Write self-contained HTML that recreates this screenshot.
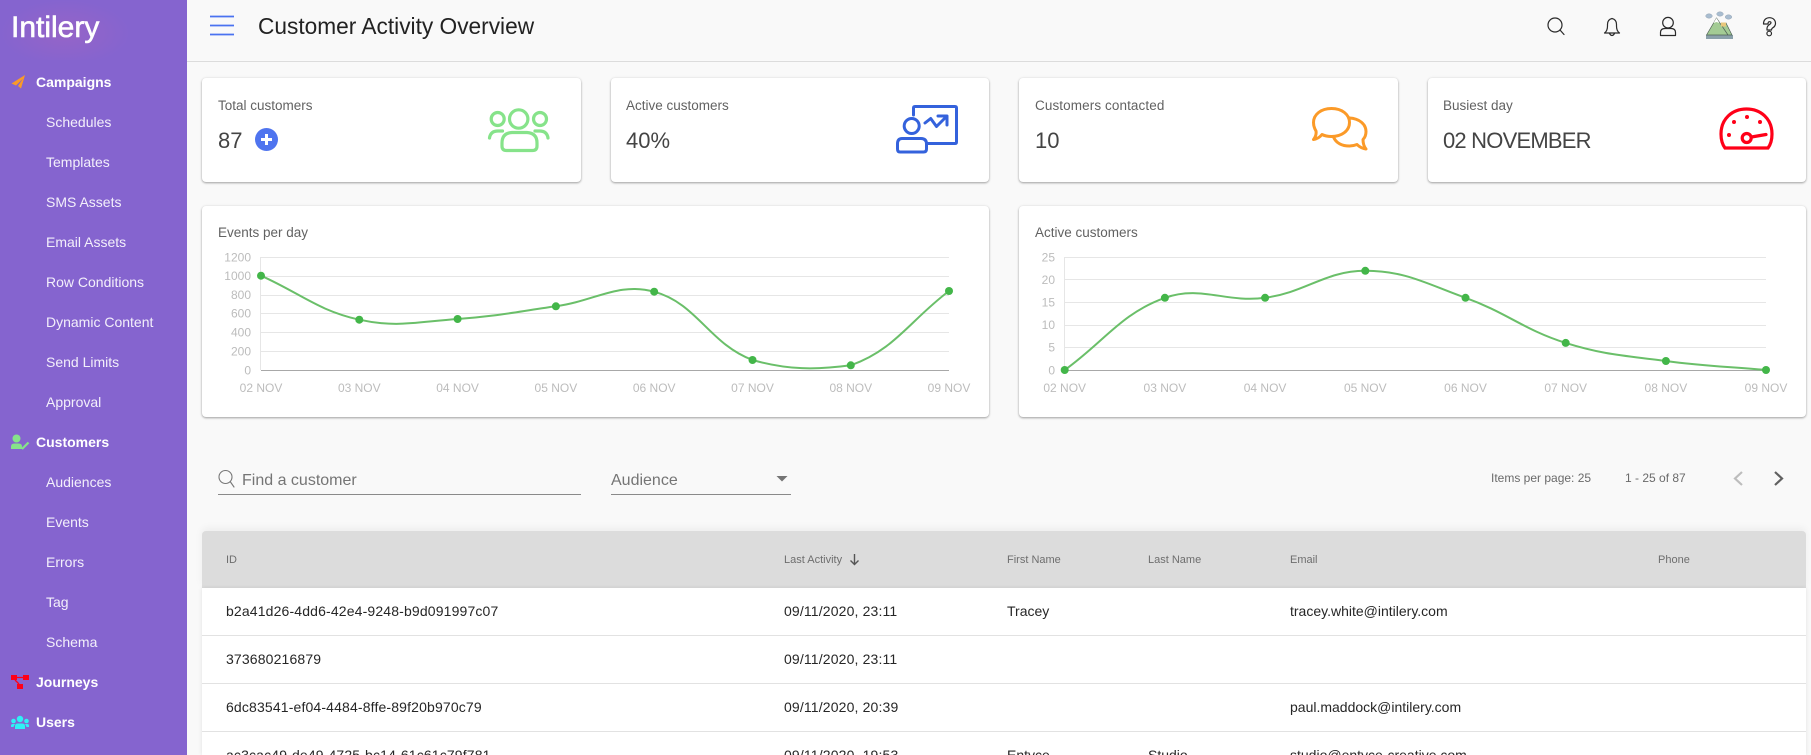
<!DOCTYPE html>
<html lang="en">
<head>
<meta charset="utf-8">
<title>Customer Activity Overview</title>
<style>
html,body{margin:0;padding:0;width:1811px;height:755px;overflow:hidden;background:#f9f9f9;font-family:"Liberation Sans",sans-serif;color:#222}
#wrap{position:relative;width:1811px;height:755px;overflow:hidden;background:#f9f9f9}
.t{position:absolute;white-space:nowrap;line-height:20px;height:20px}
#side{position:absolute;left:0;top:0;width:187px;height:755px;background:#8564cf;overflow:hidden}
#glow{position:absolute;left:0;top:0;width:130px;height:60px;background:radial-gradient(ellipse at 50% 55%,rgba(170,100,190,.45),rgba(133,100,207,0) 70%)}
.logo{left:11px;top:12px;font-size:30px;line-height:32px;height:32px;color:#fff;-webkit-text-stroke:.6px #fff}
.n{left:46px;font-size:14px;color:#f3effb}
.h{left:36px;font-size:14px;font-weight:bold;color:#fff}
#top{position:absolute;left:187px;top:0;right:0;height:61px;border-bottom:1px solid #dcdcdc}
.card{position:absolute;background:#fff;border-radius:4px;box-shadow:0 1px 2px rgba(0,0,0,.35),0 0 3px rgba(0,0,0,.06)}
.lab{font-size:13.5px;color:#626262}
.val{font-size:22px;color:#444;line-height:26px;height:26px}
#thead{position:absolute;left:202px;top:531px;width:1604px;height:57px;background:#dcdcdc;border-radius:4px 4px 0 0;box-shadow:0 -3px 8px rgba(0,0,0,.05)}
#tbody{position:absolute;left:202px;top:588px;width:1604px;height:167px;background:#fff;box-shadow:0 0 4px rgba(0,0,0,.1)}
.rl{position:absolute;left:202px;width:1604px;height:1px;background:#e2e2e2}
.th{font-size:11px;color:#6e6e6e}
.td{font-size:14px;color:#262626}
.sp{letter-spacing:.15px}
svg{position:absolute;left:0;top:0;overflow:visible}
</style>
</head>
<body>
<div id="wrap">
<div id="side">
  <div id="glow"></div>
  <div class="t logo">Intilery</div>
  <div class="t h" style="top:72px">Campaigns</div>
  <div class="t n" style="top:112px">Schedules</div>
  <div class="t n" style="top:152px">Templates</div>
  <div class="t n" style="top:192px">SMS Assets</div>
  <div class="t n" style="top:232px">Email Assets</div>
  <div class="t n" style="top:272px">Row Conditions</div>
  <div class="t n" style="top:312px">Dynamic Content</div>
  <div class="t n" style="top:352px">Send Limits</div>
  <div class="t n" style="top:392px">Approval</div>
  <div class="t h" style="top:432px">Customers</div>
  <div class="t n" style="top:472px">Audiences</div>
  <div class="t n" style="top:512px">Events</div>
  <div class="t n" style="top:552px">Errors</div>
  <div class="t n" style="top:592px">Tag</div>
  <div class="t n" style="top:632px">Schema</div>
  <div class="t h" style="top:672px">Journeys</div>
  <div class="t h" style="top:712px">Users</div>
  <svg width="187" height="755">
    <path d="M25 75 L11.5 83.5 L16 85.5 L23 78.5 L18 86 L21 88.5 Z" fill="#fb9a28"/>
    <circle cx="16.5" cy="438.5" r="4" fill="#86e38a"/><path d="M11 449 V446.5 Q11 443.5 14.5 443.5 H18.5 Q22 443.5 22 446.5 V449 Z" fill="#86e38a"/><path d="M22 449 L28.5 442.5" stroke="#86e38a" stroke-width="2.2"/>
    <rect x="11" y="675" width="6" height="5" fill="#ff0018"/><rect x="23" y="675" width="6" height="5" fill="#ff0018"/><rect x="17" y="684" width="6" height="5" fill="#ff0018"/><path d="M17 677.5 H23 M15 680 L19 684" stroke="#ff0018" stroke-width="1.3" fill="none"/>
    <g fill="#2ff0f5"><circle cx="20" cy="719" r="3.2"/><circle cx="13.5" cy="721" r="2.3"/><circle cx="26.5" cy="721" r="2.3"/><path d="M15 729 V726 Q15 723.5 18 723.5 H22 Q25 723.5 25 726 V729 Z"/><path d="M11 727 V725.5 Q11 724 13 724 H15 L13.5 727 Z"/><path d="M29 727 V725.5 Q29 724 27 724 H25 L26.5 727 Z"/></g>
  </svg>
</div>

<div id="top"></div>
<div class="t" style="left:258px;top:11px;font-size:22.7px;line-height:30px;height:30px;color:#222">Customer Activity Overview</div>

<div class="card" style="left:202px;top:78px;width:379px;height:104px"></div>
<div class="card" style="left:611px;top:78px;width:378px;height:104px"></div>
<div class="card" style="left:1019px;top:78px;width:379px;height:104px"></div>
<div class="card" style="left:1428px;top:78px;width:378px;height:104px"></div>
<div class="t lab" style="left:218px;top:96px">Total customers</div>
<div class="t lab" style="left:626px;top:96px">Active customers</div>
<div class="t lab" style="left:1035px;top:96px;letter-spacing:.1px">Customers contacted</div>
<div class="t lab" style="left:1443px;top:96px">Busiest day</div>
<div class="t val" style="left:218px;top:128px">87</div>
<div class="t val" style="left:626px;top:128px">40%</div>
<div class="t val" style="left:1035px;top:128px">10</div>
<div class="t val" style="left:1443px;top:128px;letter-spacing:-.8px">02 NOVEMBER</div>

<div class="card" style="left:202px;top:206px;width:787px;height:211px"></div>
<div class="card" style="left:1019px;top:206px;width:787px;height:211px"></div>
<div class="t lab" style="left:218px;top:223px">Events per day</div>
<div class="t lab" style="left:1035px;top:223px">Active customers</div>

<div id="thead"></div>
<div id="tbody"></div>
<div class="rl" style="top:635px"></div>
<div class="rl" style="top:683px"></div>
<div class="rl" style="top:731px"></div>

<svg width="1811" height="755">
  <!-- hamburger -->
  <path d="M210 16.5 H234 M210 25.5 H234 M210 34.5 H234" stroke="#4a72f0" stroke-width="1.7" fill="none"/>
  <!-- top icons -->
  <g fill="none" stroke="#2a2a2a" stroke-width="1.2" stroke-linecap="round" stroke-linejoin="round">
    <circle cx="1555" cy="25" r="7"/><path d="M1560 30 L1564 34.5"/>
    <path d="M1604.5 33 Q1607.5 31 1607.5 26 V24.5 Q1607.5 19.5 1612 18.5 Q1616.5 19.5 1616.5 24.5 V26 Q1616.5 31 1619.5 33 Z M1609.5 33.5 Q1612 37.5 1614.5 33.5"/>
    <circle cx="1668" cy="22.7" r="5.3"/><path d="M1660.5 35.5 V32.5 Q1660.5 28.5 1665 28.5 H1671 Q1675.5 28.5 1675.5 32.5 V35.5 Z"/>
    <path d="M1763.5 24 C1763.5 20 1766 17.7 1769.5 17.7 C1773 17.7 1775.5 20 1775.5 23.5 C1775.5 26 1774 27 1772.5 28 C1771.5 28.7 1771.5 29 1771.5 30 H1767 V28.5 C1767 26.5 1768 25.5 1769.5 24.5 C1770.5 23.8 1771 23.5 1771 22.8 C1771 22 1770.3 21.7 1769.5 21.7 C1768.7 21.7 1768 22.2 1768 24 Z"/><circle cx="1769.2" cy="33.5" r="2.3"/>
  </g>
  <!-- avatar -->
  <rect x="1706" y="35" width="27" height="4" fill="#8aa0aa"/>
  <path d="M1706.5 35 L1716.5 18 L1722 26 L1726 23 L1732 35 Z" fill="#a3cb94" stroke="#4e5f55" stroke-width=".7"/>
  <path d="M1722 26 L1728 35" stroke="#4e5f55" stroke-width=".7"/>
  <path d="M1713.5 23 L1716.5 18 L1719.5 23 L1716.5 22 Z" fill="#fff"/>
  <rect x="1721" y="22.5" width="5" height="4" fill="#e8c77c"/>
  <g fill="#a9bdd0" stroke="#8899aa" stroke-width=".4"><ellipse cx="1709" cy="16" rx="3.3" ry="2.2"/><ellipse cx="1720" cy="14" rx="3.3" ry="2.2"/><ellipse cx="1728.5" cy="17" rx="3.3" ry="2.2"/></g>
  <!-- plus -->
  <circle cx="266.5" cy="139.5" r="11.5" fill="#4f74ef"/><path d="M266.5 134 V145 M261 139.5 H272" stroke="#fff" stroke-width="3"/>
  <!-- group icon -->
  <g fill="none" stroke="#86e38a" stroke-width="3.2" stroke-linecap="round">
    <circle cx="518.7" cy="119" r="9.2"/><circle cx="497.7" cy="119" r="6.5"/><circle cx="540" cy="119" r="6.5"/>
    <path d="M512 132.5 H527 Q537 133 537 143 V146 Q537 150.5 532.5 150.5 H506.5 Q502 150.5 502 146 V143 Q502 133 512 132.5 Z"/>
    <path d="M489.5 138 Q490.5 131 498 131 H502.5"/><path d="M548 138 Q547 131 539.5 131 H535"/>
  </g>
  <!-- presentation icon -->
  <g fill="none" stroke="#3462dc" stroke-width="3" stroke-linecap="round" stroke-linejoin="round">
    <path d="M913.5 115 V108 Q913.5 106.5 915 106.5 H955 Q956.5 106.5 956.5 108 V142 Q956.5 143.5 955 143.5 H928"/>
    <circle cx="911.7" cy="126" r="7.5"/>
    <path d="M902 138.5 H921 Q926.5 138.5 926.5 144 V149 Q926.5 152 923.5 152 H900 Q897.5 152 897.5 149 V144 Q897.5 138.5 902 138.5 Z"/>
    <path d="M925 123 L930.7 118.5 L936.5 126.5 L946.5 116.5 M938 116 H947 V125"/>
  </g>
  <!-- chat icon -->
  <g fill="none" stroke="#fb9a28" stroke-width="3" stroke-linejoin="round" stroke-linecap="round">
    <path d="M1331.5 108.5 C1342 108.5 1349.5 114.5 1349.5 122.5 C1349.5 131 1341.5 136.5 1331.5 136.5 C1327.5 136.5 1325 136 1322 134.5 C1320 137 1317 139 1313.5 139.5 C1315.5 137 1316.5 134 1316 131 C1314.5 128.5 1313.5 126 1313.5 122.5 C1313.5 114.5 1321 108.5 1331.5 108.5 Z"/>
    <path d="M1349.5 118 C1359 118.5 1366 124 1366 131.5 C1366 135 1365 137.5 1363 139.5 C1363 143 1364 146.5 1366 149 C1362.5 148.5 1359.5 147 1357 144.5 C1354.5 145.5 1352 146 1349.5 146 C1342 146 1336 143 1333.5 137"/>
  </g>
  <!-- gauge -->
  <g fill="none" stroke="#ff0018" stroke-width="3.2" stroke-linecap="round">
    <path d="M1725 148 C1722 144 1721 140 1721 134 C1721 119 1732 109 1746.5 109 C1761 109 1772 119 1772 134 C1772 140 1771 144 1768 148 Z"/>
    <circle cx="1746.7" cy="138" r="4.5"/><path d="M1751.5 137 L1766 134.5"/>
  </g>
  <g fill="#ff0018"><circle cx="1734" cy="122" r="2"/><circle cx="1747" cy="117" r="2"/><circle cx="1760" cy="122" r="2"/><circle cx="1729" cy="135" r="2"/></g>

  <!-- chart grid -->
  <g stroke="#e6e6e6" stroke-width="1" fill="none">
    <path d="M261 257.5 H949 M261 276.5 H949 M261 295.5 H949 M261 313.5 H949 M261 332.5 H949 M261 351.5 H949"/>
    <path d="M260.5 257 V370"/>
    <path d="M1065 257.5 H1766 M1065 279.5 H1766 M1065 302.5 H1766 M1065 325.5 H1766 M1065 347.5 H1766"/>
    <path d="M1064.5 257 V370"/>
  </g>
  <path d="M261 370.5 H949 M1065 370.5 H1766" stroke="#a8a8a8" stroke-width="1" fill="none"/>
  <path d="M261 275.7 C300.3 293.3 318.2 310.65 359.3 319.7 C396.9 328 418.5 321.67 457.6 319 C497.1 316.3 516.6 311.76 555.9 306.3 C595.2 300.84 618.4 281.9 654.2 291.7 C697.1 303.4 709.3 343.8 752.5 360 C787.9 370 815.8 370 850.8 365.3 C894.4 350 909.7 320.7 949 291" fill="none" stroke="#6abf69" stroke-width="2"/>
  <g fill="#43b649"><circle cx="261" cy="275.7" r="4"/><circle cx="359.3" cy="319.7" r="4"/><circle cx="457.6" cy="319" r="4"/><circle cx="555.9" cy="306.3" r="4"/><circle cx="654.2" cy="291.7" r="4"/><circle cx="752.5" cy="360" r="4"/><circle cx="850.8" cy="365.3" r="4"/><circle cx="949" cy="291" r="4"/></g>
  <path d="M1064.7 370 C1104.8 341.1 1120.6 313.8 1164.9 297.8 C1200.8 284.9 1225.8 303.1 1265.1 297.8 C1306 292.3 1325.2 270.8 1365.3 270.8 C1405.4 270.8 1426.6 283.8 1465.5 297.8 C1506.8 312.7 1524 329.8 1565.7 342.9 C1604.2 355 1625.6 355.6 1665.9 361 C1705.8 366.4 1726 366.4 1766 370" fill="none" stroke="#6abf69" stroke-width="2"/>
  <g fill="#43b649"><circle cx="1064.7" cy="370" r="4"/><circle cx="1164.9" cy="297.8" r="4"/><circle cx="1265.1" cy="297.8" r="4"/><circle cx="1365.3" cy="270.8" r="4"/><circle cx="1465.5" cy="297.8" r="4"/><circle cx="1565.7" cy="342.9" r="4"/><circle cx="1665.9" cy="361" r="4"/><circle cx="1766" cy="370" r="4"/></g>

  <g font-family="'Liberation Sans',sans-serif" font-size="12" fill="#bcbcbc">
    <g text-anchor="end">
      <text x="251" y="261.5">1200</text><text x="251" y="280">1000</text><text x="251" y="299">800</text><text x="251" y="317.5">600</text><text x="251" y="336.5">400</text><text x="251" y="355.5">200</text><text x="251" y="374.5">0</text>
      <text x="1055" y="261.5">25</text><text x="1055" y="284">20</text><text x="1055" y="306.5">15</text><text x="1055" y="329">10</text><text x="1055" y="351.5">5</text><text x="1055" y="374.5">0</text>
    </g>
    <g text-anchor="middle">
      <text x="261" y="392">02 NOV</text><text x="359.3" y="392">03 NOV</text><text x="457.6" y="392">04 NOV</text><text x="555.9" y="392">05 NOV</text><text x="654.2" y="392">06 NOV</text><text x="752.5" y="392">07 NOV</text><text x="850.8" y="392">08 NOV</text><text x="949" y="392">09 NOV</text>
      <text x="1064.7" y="392">02 NOV</text><text x="1164.9" y="392">03 NOV</text><text x="1265.1" y="392">04 NOV</text><text x="1365.3" y="392">05 NOV</text><text x="1465.5" y="392">06 NOV</text><text x="1565.7" y="392">07 NOV</text><text x="1665.9" y="392">08 NOV</text><text x="1766" y="392">09 NOV</text>
    </g>
  </g>

  <!-- search row -->
  <g fill="none" stroke="#777" stroke-width="1.1" stroke-linecap="round"><circle cx="225.5" cy="477" r="6.5"/><path d="M230.5 482 L234 487"/></g>
  <path d="M218 494.5 H581 M611 494.5 H791" stroke="#8a8a8a" stroke-width="1"/>
  <path d="M776.5 476 H787.5 L782 481.5 Z" fill="#757575"/>
  <path d="M1742 472 L1735 478.5 L1742 485" fill="none" stroke="#bdbdbd" stroke-width="2.2"/>
  <path d="M1775 472 L1782 478.5 L1775 485" fill="none" stroke="#616161" stroke-width="2.2"/>
  <path d="M854.5 554 V564 M850.5 560.5 L854.5 564.5 L858.5 560.5" fill="none" stroke="#555" stroke-width="1.4"/>
</svg>

<div class="t" style="left:242px;top:471px;font-size:16px;color:#757575">Find a customer</div>
<div class="t" style="left:611px;top:471px;font-size:16px;color:#757575">Audience</div>
<div class="t" style="left:1491px;top:468px;font-size:12px;color:#6a6a6a">Items per page: 25</div>
<div class="t" style="left:1625px;top:468px;font-size:12px;color:#6a6a6a">1 - 25 of 87</div>

<div class="t th" style="left:226px;top:550px">ID</div>
<div class="t th" style="left:784px;top:550px">Last Activity</div>
<div class="t th" style="left:1007px;top:550px">First Name</div>
<div class="t th" style="left:1148px;top:550px">Last Name</div>
<div class="t th" style="left:1290px;top:550px">Email</div>
<div class="t th" style="left:1658px;top:550px">Phone</div>

<div class="t td sp" style="left:226px;top:601px">b2a41d26-4dd6-42e4-9248-b9d091997c07</div>
<div class="t td sp" style="left:784px;top:601px">09/11/2020, 23:11</div>
<div class="t td" style="left:1007px;top:601px">Tracey</div>
<div class="t td" style="left:1290px;top:601px">tracey.white@intilery.com</div>

<div class="t td sp" style="left:226px;top:649px">373680216879</div>
<div class="t td sp" style="left:784px;top:649px">09/11/2020, 23:11</div>

<div class="t td sp" style="left:226px;top:697px">6dc83541-ef04-4484-8ffe-89f20b970c79</div>
<div class="t td sp" style="left:784px;top:697px">09/11/2020, 20:39</div>
<div class="t td" style="left:1290px;top:697px">paul.maddock@intilery.com</div>

<div class="t td sp" style="left:226px;top:745px">ac3cac49-de49-4725-bc14-61c61c79f781</div>
<div class="t td sp" style="left:784px;top:745px">09/11/2020, 19:53</div>
<div class="t td" style="left:1007px;top:745px">Entyce</div>
<div class="t td" style="left:1148px;top:745px">Studio</div>
<div class="t td" style="left:1290px;top:745px">studio@entyce-creative.com</div>
</div>
</body>
</html>
